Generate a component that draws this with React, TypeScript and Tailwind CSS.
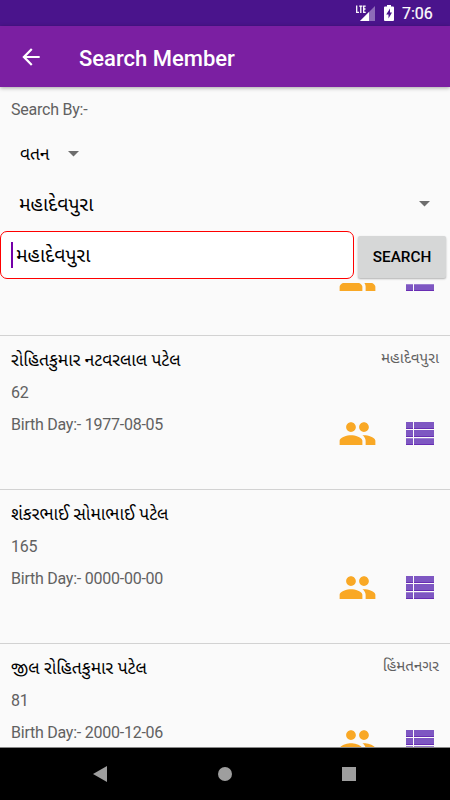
import React from "react";
import { MdArrowBack, MdPeople } from "react-icons/md";

type Member = { id: number; name: string; village: string; code: string; birthDay: string };

const members: Member[] = [
  { id: 1, name: "", village: "", code: "", birthDay: "" },
  { id: 2, name: "રોહિતકુમાર નટવરલાલ પટેલ", village: "મહાદેવપુરા", code: "62", birthDay: "1977-08-05" },
  { id: 3, name: "શંકરભાઈ સોમાભાઈ પટેલ", village: "", code: "165", birthDay: "0000-00-00" },
  { id: 4, name: "જીલ રોહિતકુમાર પટેલ", village: "હિંમતનગર", code: "81", birthDay: "2000-12-06" },
];

function StatusBar() {
  return (
    <div className="flex h-[26px] shrink-0 items-center bg-[#4a148c] pl-[355px] text-white">
      <svg width="21" height="26" viewBox="0 0 21 26">
        <path d="M20 6v15H5z" fill="#8d6bb8" />
        <path d="M14 12v9H5z" fill="#fff" />
        <path d="M0 4h11v9H0z" fill="#4a148c" />
        <path d="M1.700 5.500v6.900h2.300M4.200 6.100h3.200M5.800 6v7M10.700 6.100H8.700v6.300h2M8.700 9h1.800" stroke="#fff" strokeWidth="1.300" fill="none" />
      </svg>
      <svg className="ml-[8px]" width="10" height="26" viewBox="0 0 10 26">
        <path d="M3 5h4v1.500h2a1 1 0 0 1 1 1V20a1 1 0 0 1-1 1H1a1 1 0 0 1-1-1V7.500a1 1 0 0 1 1-1h2z" fill="#fff" />
        <path d="M6 8.500 2.200 14.500h2.300v4L8 12.500H6z" fill="#4a148c" />
      </svg>
      <span className="ml-[8px] mt-[2px] text-[16px] leading-none [-webkit-text-stroke:0.2px_white]">7:06</span>
    </div>
  );
}

function Caret() {
  return (
    <svg width="11" height="6" viewBox="0 0 11 6" fill="#6d6d6d">
      <path d="M0 0h11L5.500 5.500z" />
    </svg>
  );
}

function ListIcon() {
  return (
    <svg width="28" height="24" viewBox="0 0 28 24">
      <path d="M0 0h7v7H0zM8 0H28v7H8zM0 8h7v7H0zM8 8H28v7H8zM0 16.300h7V23H0zM8 16.300H28V23H8z" fill="#7e57c2" />
      <path d="M0 6.300h7V7H0zM8 6.300H28V7H8zM0 14.300h7v.7H0zM8 14.300H28v.7H8zM0 22.300h7v.7H0zM8 22.300H28v.7H8z" fill="#6220ae" />
    </svg>
  );
}

function MemberRow({ member }: { member: Member }) {
  return (
    <div className="flex h-[154px] shrink-0 justify-between border-b border-[#d2d2d2] pl-[11px] pr-[11px]">
      <div className="pt-[13px] text-[16px] tracking-[-0.24px] text-[#616161]">
        <p className="h-[22px] whitespace-nowrap text-[17.400px] leading-[22px] tracking-normal text-black">{member.name}</p>
        <p className="mt-[11px] h-[22px] leading-[22px]">{member.code}</p>
        <p className="mt-[10px] h-[22px] whitespace-nowrap leading-[22px]">{member.birthDay ? `Birth Day:- ${member.birthDay}` : null}</p>
      </div>
      <div className="flex flex-col items-end pt-[11px]">
        <p className="h-[22px] whitespace-nowrap text-[15.200px] leading-[22px] text-[#616161]">{member.village}</p>
        <div className="mt-[45px] mr-[5px] flex items-start gap-[29px]">
          <MdPeople size={39} color="#f9a825" />
          <div className="pt-[8px]">
            <ListIcon />
          </div>
        </div>
      </div>
    </div>
  );
}

export default function App() {
  return (
    <div className="flex h-[800px] w-[450px] flex-col overflow-hidden bg-[#fafafa] font-['Roboto','Noto_Sans_Gujarati','Noto_Sans',sans-serif]">
      <StatusBar />
      <header className="flex h-[61px] shrink-0 items-center bg-[#7b1fa2] pl-[18px] text-white shadow-[0_1px_4px_rgba(0,0,0,0.35)]">
        <MdArrowBack size={26} />
        <h1 className="ml-[35px] mt-[3px] text-[22px] font-medium">Search Member</h1>
      </header>

      <section className="flex h-[196px] shrink-0 flex-col">
        <p className="mt-[12px] h-[22px] pl-[11px] text-[16px] leading-[22px] tracking-[-0.24px] text-[#616161]">Search By:-</p>
        <div className="mt-[22px] flex h-[22px] items-center pl-[20px]">
          <span className="w-[48px] whitespace-nowrap text-[17.400px] leading-[22px] text-black">વતન</span>
          <Caret />
        </div>
        <div className="mt-[26px] flex h-[26px] items-center justify-between pl-[19px] pr-[20px]">
          <span className="whitespace-nowrap pt-[2px] text-[19.500px] text-black">મહાદેવપુરા</span>
          <Caret />
        </div>
        <div className="mt-[14px] flex h-[48px] gap-[4px]">
          <div className="flex w-[354px] items-center rounded-[7px] border border-[#f00] bg-white pl-[10px]">
            <span className="h-[26px] w-[2px] bg-[#7400a8]" />
            <span className="ml-[3px] whitespace-nowrap pt-[2px] text-[19.500px] text-black">મહાદેવપુરા</span>
          </div>
          <button className="mt-[5px] h-[42px] w-[88px] rounded-[2px] bg-[#d6d7d7] text-[15.300px] font-medium text-black shadow-[0_1px_2px_rgba(0,0,0,0.3)]">
            SEARCH
          </button>
        </div>
      </section>

      {/* list is scrolled: only the bottom of the first row shows */}
      <main className="flex min-h-0 flex-1 flex-col justify-start overflow-hidden">
        <div className="-mt-[101px] flex flex-col">
          {members.map((m) => (
            <MemberRow key={m.id} member={m} />
          ))}
        </div>
      </main>

      <nav className="flex h-[53px] shrink-0 items-center justify-between border-t border-[#888] bg-black pl-[93px] pr-[94px]">
        <svg width="14" height="16" viewBox="0 0 14 16" fill="#9e9e9e">
          <path d="M14 0v16L0 8z" />
        </svg>
        <span className="h-[14px] w-[14px] rounded-full bg-[#9e9e9e]" />
        <span className="h-[14px] w-[14px] bg-[#9e9e9e]" />
      </nav>
    </div>
  );
}
